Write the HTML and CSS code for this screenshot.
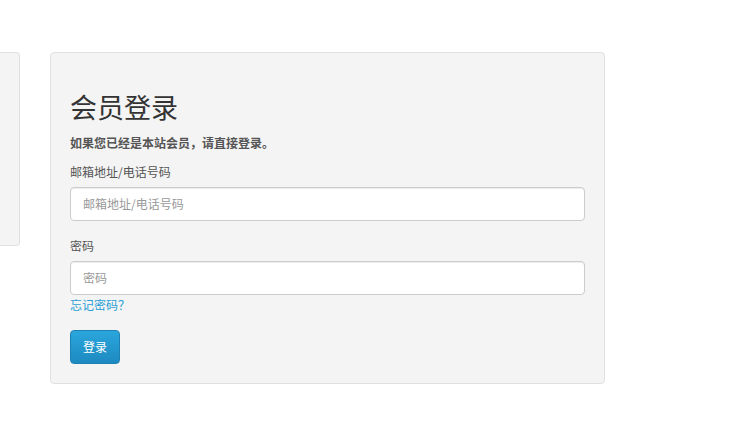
FILE: index.html
```html
<!DOCTYPE html>
<html lang="zh-CN">
  <head>
    <meta charset="UTF-8" />
    <meta name="viewport" content="width=device-width, initial-scale=1.0" />
    <title>会员登录</title>
    <link rel="stylesheet" href="styles.css">
  </head>
  <body>
    <div class="page">
      <div class="side"></div>

      <!-- Login box -->
      <div class="well">
        <h2>会员登录</h2>
        <p class="lead">如果您已经是本站会员，请直接登录。</p>
        <form>
          <div class="form-group">
            <label for="email">邮箱地址/电话号码</label>
            <input type="text" id="email" class="form-control" placeholder="邮箱地址/电话号码" />
          </div>
          <div class="form-group">
            <label for="password">密码</label>
            <input type="password" id="password" class="form-control" placeholder="密码" />
            <a href="#" class="forgot">忘记密码？</a>
          </div>
          <button type="button" class="btn">登录</button>
        </form>
      </div>
    </div>
  </body>
</html>
```

FILE: styles.css
```css
/* General Reset */
* {
  margin: 0;
  padding: 0;
  box-sizing: border-box;
}

body {
  font-family: "Noto Sans CJK SC", "Liberation Sans", sans-serif;
  font-size: 12px;
  line-height: 20px;
  color: #555;
  background: #fff;
}

.page {
  display: flex;
  align-items: flex-start;
  gap: 30px;
  padding-top: 52px;
}

.side {
  width: 20px;
  height: 194px;
  background: #f4f4f4;
  border: 1px solid #e0e0e0;
  border-left: none;
  border-radius: 0 4px 4px 0;
}

.well {
  width: 555px;
  padding: 19px;
  background: #f4f4f4;
  border: 1px solid #e0e0e0;
  border-radius: 4px;
}

h2 {
  margin: 20px 0 11px;
  font-size: 27px;
  font-weight: normal;
  line-height: 1.1;
  color: #333;
}

.lead {
  font-weight: bold;
  margin-bottom: 9px;
}

.form-group {
  margin-bottom: 15px;
}

.form-group label {
  display: block;
  margin-bottom: 5px;
}

.form-control {
  display: block;
  width: 100%;
  height: 34px;
  padding: 6px 12px;
  font-family: inherit;
  font-size: 12px;
  color: #555;
  background: #fff;
  border: 1px solid #ccc;
  border-radius: 4px;
  box-shadow: inset 0 1px 1px rgba(0, 0, 0, 0.075);
}

.form-control::placeholder {
  color: #999;
}

.forgot {
  display: block;
  color: #2a9fd6;
  text-decoration: none;
}

.btn {
  display: block;
  height: 34px;
  padding: 0 12px;
  font-family: inherit;
  font-size: 12px;
  color: #fff;
  background: linear-gradient(#2aa6dd, #1d8ac0);
  border: 1px solid #1f80b3;
  border-radius: 4px;
  cursor: pointer;
}
```
